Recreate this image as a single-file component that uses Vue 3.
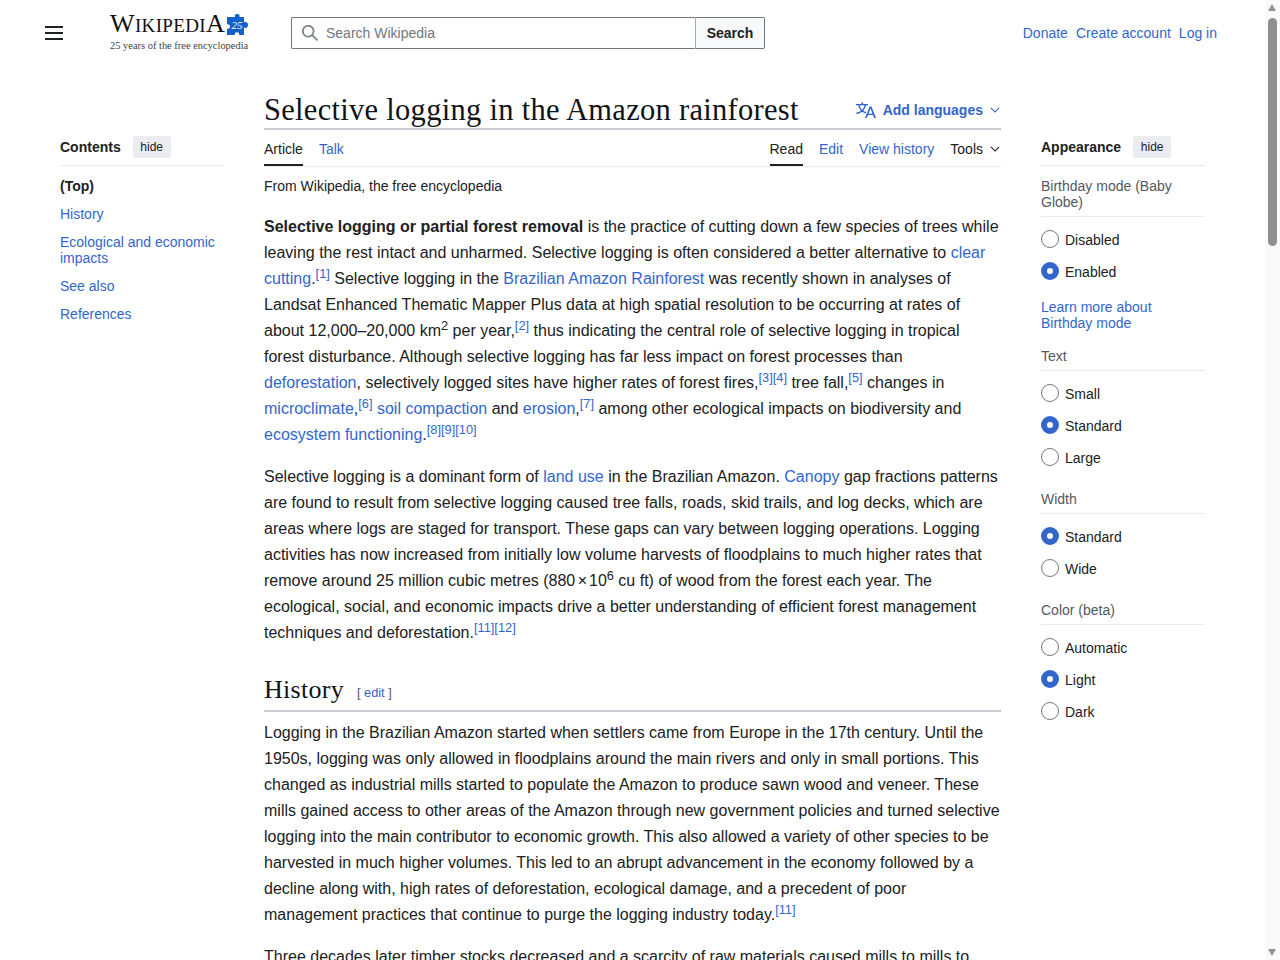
<script setup>
const toc = [
  { label: 'History' },
  { label: 'Ecological and economic impacts' },
  { label: 'See also' },
  { label: 'References' },
]
const groups = [
  { title: 'Birthday mode (Baby Globe)', options: [['Disabled', false], ['Enabled', true]], more: 'Learn more about Birthday mode' },
  { title: 'Text', options: [['Small', false], ['Standard', true], ['Large', false]] },
  { title: 'Width', options: [['Standard', true], ['Wide', false]] },
  { title: 'Color (beta)', options: [['Automatic', false], ['Light', true], ['Dark', false]] },
]
</script>

<template>
  <div class="page">
    <header class="header">
      <button class="menu" aria-label="Main menu">
        <svg width="20" height="20" viewBox="0 0 20 20"><path fill="#202122" d="M1 3v2h18V3zm0 8h18V9H1zm0 6h18v-2H1z"/></svg>
      </button>
      <a class="logo">
        <span class="wordmark-row">
          <span class="wordmark">W<span class="small">IKIPEDI</span>A</span>
          <svg class="puzzle" width="22" height="22" viewBox="0 0 22 22">
            <path fill="#1260c8" d="M0 3h8c-.9-1.700.3-3 2.200-3s3.100 1.300 2.200 3H17v5.500c1.500-.9 4-.4 4 2.500s-2.500 3.400-4 2.500V21h-5c.8-1.600-.3-2.800-2-2.800s-2.800 1.200-2 2.800H0v-6.500c1.500.8 3-.2 3-2s-1.500-2.800-3-2z"/>
            <text x="10" y="15" class="puzzle-text">25</text>
          </svg>
        </span>
        <span class="tagline">25 years of the free encyclopedia</span>
      </a>
      <form class="search" @submit.prevent>
        <label class="search-box">
          <svg width="18" height="18" viewBox="0 0 20 20"><path fill="#7f8489" d="M12.200 13.600a7 7 0 111.400-1.400l5.400 5.400-1.400 1.400zM3 8a5 5 0 1010 0A5 5 0 003 8"/></svg>
          <input type="text" placeholder="Search Wikipedia" />
        </label>
        <button class="search-btn">Search</button>
      </form>
      <nav class="user-links">
        <a>Donate</a><a>Create account</a><a>Log in</a>
      </nav>
    </header>

    <div class="columns">
      <aside class="side toc">
        <div class="side-head">
          <strong>Contents</strong><span class="hide">hide</span>
        </div>
        <ul class="toc-list">
          <li class="top">(Top)</li>
          <li v-for="item in toc" :key="item.label"><a>{{ item.label }}</a></li>
        </ul>
      </aside>

      <main class="content">
        <div class="title-row">
          <h1>Selective logging in the Amazon rainforest</h1>
          <a class="languages">
            <svg width="20" height="20" viewBox="0 0 20 20"><path fill="#3366cc" d="M20 18h-1.440a.6.6 0 01-.4-.12.8.8 0 01-.23-.31L17 15h-5l-1 2.540a.8.8 0 01-.22.3.6.6 0 01-.4.14H9l4.550-11.470h1.890zm-3.530-4.310L14.890 9.500a12 12 0 01-.39-1.240q-.09.37-.19.69l-.19.56-1.580 4.190zm-6.300-1.580a13.400 13.400 0 01-2.910-1.410 11.460 11.460 0 002.810-5.370H12V4H7.310a4 4 0 00-.2-.56C6.870 2.790 6.600 2 6.600 2l-1.470.5s.4.89.6 1.500H0v1.330h2.150A11.230 11.230 0 005 10.700a17.190 17.190 0 01-5 2.100q.56.82.87 1.380a23.280 23.280 0 005.220-2.510 15.640 15.640 0 003.560 1.770zM3.630 5.330h4.910a8.110 8.110 0 01-2.450 4.450 9.110 9.110 0 01-2.460-4.450"/></svg>
            <span>Add languages</span>
            <svg class="chev" width="10" height="10" viewBox="0 0 20 20"><path fill="#3366cc" d="m17.500 4.750-7.500 7.500-7.500-7.500L1 6.250l9 9 9-9z"/></svg>
          </a>
        </div>
        <div class="tabs">
          <div class="tab-group">
            <span class="tab active">Article</span>
            <a class="tab">Talk</a>
          </div>
          <div class="tab-group">
            <span class="tab active">Read</span>
            <a class="tab">Edit</a>
            <a class="tab">View history</a>
            <span class="tab tools">Tools
              <svg width="10" height="10" viewBox="0 0 20 20"><path fill="#202122" d="m17.500 4.750-7.500 7.500-7.500-7.500L1 6.250l9 9 9-9z"/></svg>
            </span>
          </div>
        </div>
        <div class="from">From Wikipedia, the free encyclopedia</div>

        <p><b>Selective logging or partial forest removal</b> is the practice of cutting down a few species of trees while leaving the rest intact and unharmed. Selective logging is often considered a better alternative to <a>clear cutting</a>.<sup><a>[1]</a></sup> Selective logging in the <a>Brazilian Amazon Rainforest</a> was recently shown in analyses of Landsat Enhanced Thematic Mapper Plus data at high spatial resolution to be occurring at rates of about 12,000–20,000 km<sup>2</sup> per year,<sup><a>[2]</a></sup> thus indicating the central role of selective logging in tropical forest disturbance. Although selective logging has far less impact on forest processes than <a>deforestation</a>, selectively logged sites have higher rates of forest fires,<sup><a>[3]</a><a>[4]</a></sup> tree fall,<sup><a>[5]</a></sup> changes in <a>microclimate</a>,<sup><a>[6]</a></sup> <a>soil compaction</a> and <a>erosion</a>,<sup><a>[7]</a></sup> among other ecological impacts on biodiversity and <a>ecosystem functioning</a>.<sup><a>[8]</a><a>[9]</a><a>[10]</a></sup></p>

        <p>Selective logging is a dominant form of <a>land use</a> in the Brazilian Amazon. <a>Canopy</a> gap fractions patterns are found to result from selective logging caused tree falls, roads, skid trails, and log decks, which are areas where logs are staged for transport. These gaps can vary between logging operations. Logging activities has now increased from initially low volume harvests of floodplains to much higher rates that remove around 25 million cubic metres (880<span class="times">×</span>10<sup>6</sup> cu ft) of wood from the forest each year. The ecological, social, and economic impacts drive a better understanding of efficient forest management techniques and deforestation.<sup><a>[11]</a><a>[12]</a></sup></p>

        <h2>History <span class="edit">[ <a>edit</a> ]</span></h2>

        <p>Logging in the Brazilian Amazon started when settlers came from Europe in the 17th century. Until the 1950s, logging was only allowed in floodplains around the main rivers and only in small portions. This changed as industrial mills started to populate the Amazon to produce sawn wood and veneer. These mills gained access to other areas of the Amazon through new government policies and turned selective logging into the main contributor to economic growth. This also allowed a variety of other species to be harvested in much higher volumes. This led to an abrupt advancement in the economy followed by a decline along with, high rates of deforestation, ecological damage, and a precedent of poor management practices that continue to purge the logging industry today.<sup><a>[11]</a></sup></p>

        <p>Three decades later timber stocks decreased and a scarcity of raw materials caused mills to mills to</p>
      </main>

      <aside class="side appearance">
        <div class="side-head">
          <strong>Appearance</strong><span class="hide">hide</span>
        </div>
        <section v-for="g in groups" :key="g.title" class="group">
          <div class="group-title">{{ g.title }}</div>
          <div v-for="opt in g.options" :key="opt[0]" class="option">
            <span class="radio" :class="{ on: opt[1] }"></span>
            <span>{{ opt[0] }}</span>
          </div>
          <a v-if="g.more" class="more">{{ g.more }}</a>
        </section>
      </aside>
    </div>

    <div class="scrollbar" aria-hidden="true">
      <span class="arrow up"></span>
      <span class="thumb"></span>
      <span class="arrow down"></span>
    </div>
  </div>
</template>

<style>
html, body { margin: 0; height: 100%; overflow: hidden; background: #fff; }
</style>

<style scoped>
.page {
  position: relative;
  width: 1280px;
  height: 960px;
  overflow: hidden;
  background: #fff;
  color: #202122;
  font-family: "Liberation Sans", Arial, sans-serif;
  font-size: 14px;
}
a { color: #3366cc; text-decoration: none; }

.header { display: flex; align-items: flex-start; height: 66px; padding-left: 44px; }
.menu { width: 20px; height: 20px; padding: 0; margin-top: 23px; border: 0; background: none; }
.logo { display: flex; flex-direction: column; margin: 11px 0 0 46px; width: 182px; color: #202122; }
.wordmark-row { display: flex; align-items: flex-start; height: 28px; }
.wordmark {
  font-family: "Liberation Serif", serif;
  font-size: 26px;
  line-height: 26px;
  letter-spacing: .35px;
  color: #111;
}
.wordmark .small { font-size: 19px; }
.puzzle { margin: 3px 0 0 2px; }
.puzzle-text { font-family: "Liberation Serif", serif; font-style: italic; font-size: 11px; fill: #fff; text-anchor: middle; }
.tagline { font-family: "Liberation Serif", serif; font-size: 10.450px; line-height: 14px; color: #444; white-space: nowrap; }

.search { display: flex; margin: 17px 0 0 -1px; }
.search-box {
  display: flex; align-items: center; gap: 7px;
  box-sizing: border-box; width: 404px; height: 32px; padding-left: 9px;
  border: 1px solid #72777d; border-right: 0; border-radius: 2px 0 0 2px;
}
.search-box input { flex: 1; border: 0; outline: 0; padding: 0; font: 14px "Liberation Sans", Arial, sans-serif; color: #202122; }
.search-box input::placeholder { color: #72777d; opacity: 1; }
.search-btn {
  box-sizing: border-box; width: 70px; height: 32px; margin: 0; padding: 0;
  border: 1px solid #72777d; border-left: 1px solid #a2a9b1; border-radius: 0 2px 2px 0;
  background: #f8f9fa; color: #202122;
  font: bold 14px "Liberation Sans", Arial, sans-serif;
}
.user-links { display: flex; gap: 8px; margin: 25px 0 0 auto; padding-right: 63px; line-height: 16px; }

.columns { display: grid; grid-template-columns: 164px 737px 164px; column-gap: 40px; padding-left: 60px; }

.side { padding-top: 70px; }
.side-head { display: flex; gap: 12px; height: 29px; border-bottom: 1px solid #eaecf0; align-items: flex-start; }
.side-head strong { line-height: 22px; }
.hide {
  display: block; width: 38px; height: 22px; line-height: 22px; text-align: center;
  font-size: 12px; background: #eaecf0; border-radius: 2px; color: #202122;
}
.toc-list { list-style: none; margin: 0; padding: 12px 0 0; line-height: 16px; }
.toc-list li { margin-bottom: 12px; }
.toc-list .top { font-weight: bold; }

.content { min-width: 0; }
.title-row { display: flex; justify-content: space-between; align-items: flex-end; height: 64px; box-sizing: border-box; border-bottom: 2px solid #c8ccd1; }
h1 { margin: 0; font: 400 30.500px/36px "Liberation Serif", Georgia, serif; letter-spacing: .29px; color: #101418; white-space: nowrap; }
.languages { display: flex; align-items: center; height: 36px; font-weight: bold; color: #3366cc; }
.languages svg:first-child { margin-right: 7px; }
.languages .chev { margin: 0 1px 0 7px; }

.tabs { display: flex; justify-content: space-between; height: 36px; border-bottom: 1px solid #eaecf0; }
.tab-group { display: flex; gap: 16px; }
.tab { display: block; height: 36px; box-sizing: border-box; line-height: 38px; }
.tab.active { border-bottom: 2px solid #202122; color: #202122; }
.tools { color: #202122; display: flex; gap: 7px; align-items: center; padding-right: 1px; padding-top: 2px; }

.from { margin-top: 11px; line-height: 16px; }
p { margin: 0 0 16px; font-size: 16px; line-height: 26px; }
.from + p { margin-top: 20px; }
sup { font-size: 12.800px; line-height: 1; vertical-align: super; }
.times { margin: 0 .125em 0 .15em; }
h2 { margin: 22px 0 8px; height: 44px; box-sizing: border-box; padding-top: 4px; font: 400 26px/36px "Liberation Serif", Georgia, serif; letter-spacing: .3px; color: #101418; border-bottom: 2px solid #c8ccd1; }
.edit { margin-left: 6px; vertical-align: 1px; font: 400 12.800px "Liberation Sans", Arial, sans-serif; letter-spacing: 0; color: #54595d; }

.group-title { padding: 0 0 6px; line-height: 16px; color: #54595d; border-bottom: 1px solid #eaecf0; margin: 12px 0 7px; }
.group + .group .group-title { margin-top: 17px; }
.option { display: flex; align-items: center; gap: 6px; height: 32px; }
.radio { box-sizing: border-box; width: 18px; height: 18px; margin-bottom: 2px; border: 1px solid #72777d; border-radius: 50%; background: #fff; }
.radio.on { border: 6px solid #3366cc; }
.more { display: block; margin: 11px 0 2px; line-height: 16px; }

.scrollbar { position: absolute; top: 0; right: 0; bottom: 0; width: 15px; background: #fafafa; }
.thumb { display: block; position: absolute; top: 18px; left: 3px; width: 9px; height: 228px; border-radius: 5px; background: #8f8f8f; }
.arrow { position: absolute; left: 3px; width: 0; height: 0; border-left: 4.500px solid transparent; border-right: 4.500px solid transparent; }
.arrow.up { top: 4px; border-bottom: 7px solid #8f8f8f; }
.arrow.down { bottom: 4px; border-top: 7px solid #8f8f8f; }
</style>
